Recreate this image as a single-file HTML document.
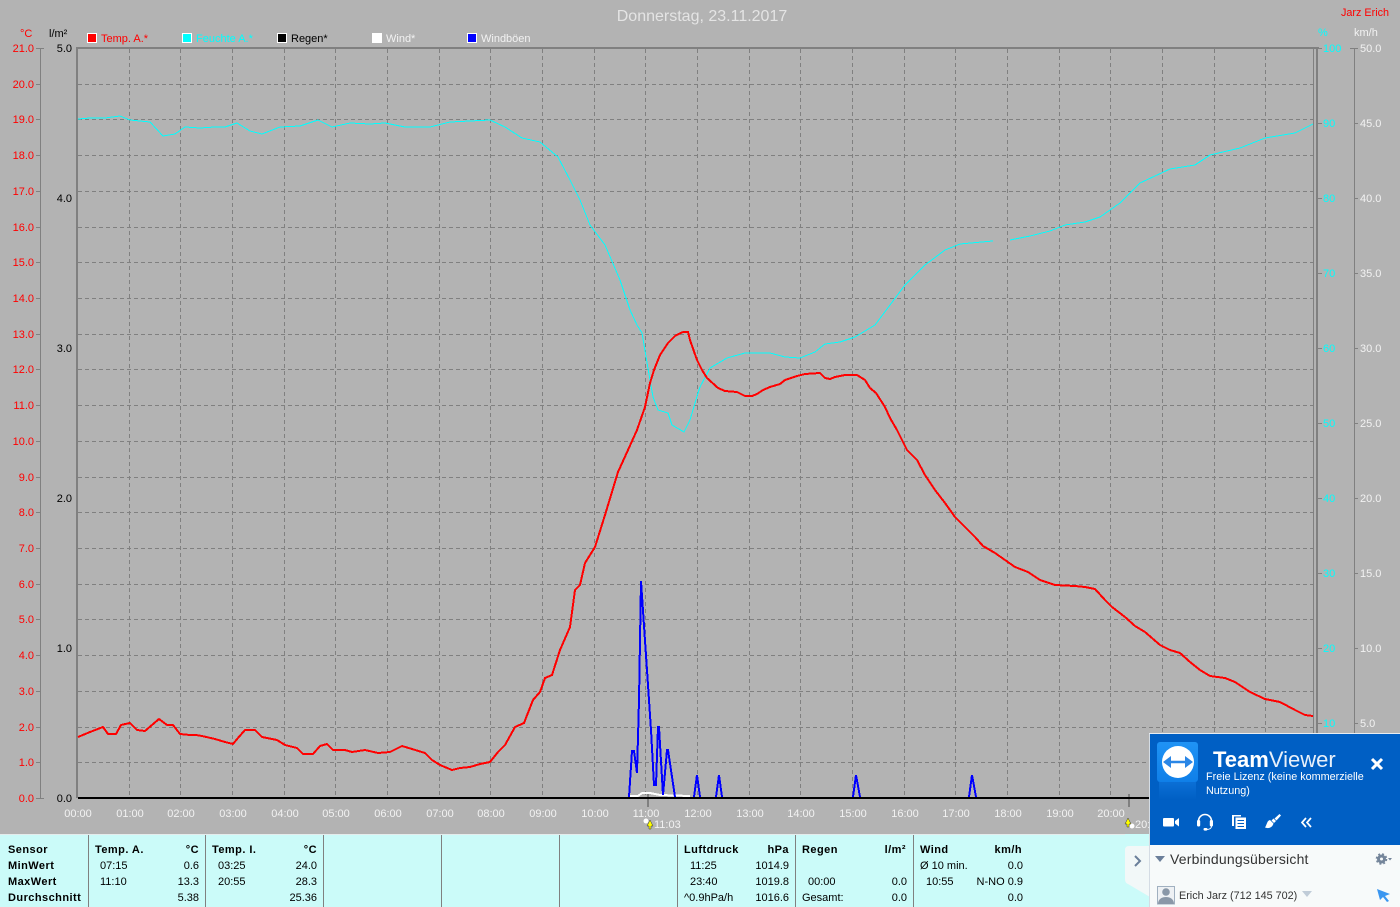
<!DOCTYPE html>
<html><head><meta charset="utf-8"><style>
html,body{margin:0;padding:0;width:1400px;height:907px;overflow:hidden;background:#b3b3b3}
svg{display:block;position:absolute;left:0;top:0}
text{font-family:"Liberation Sans",sans-serif;font-size:11px}
.r text{fill:#f00;text-anchor:end}
.k text{fill:#000;text-anchor:end}
.c text{fill:#0ff;text-anchor:start}
.w text{fill:#f2f2f2;text-anchor:start}
.x text{fill:#f2f2f2;text-anchor:middle}
.b text{fill:#000;font-weight:bold;letter-spacing:.45px}
.t text{fill:#000}
.e{text-anchor:end}
</style></head><body>
<svg width="1400" height="907" viewBox="0 0 1400 907">
<defs><linearGradient id="lg" x1="0" y1="0" x2="0" y2="1"><stop offset="0" stop-color="#1f93f5"/><stop offset="1" stop-color="#0f7fe8"/></linearGradient>
<linearGradient id="rf" x1="0" y1="0" x2="0" y2="1"><stop offset="0" stop-color="#0b6fd6"/><stop offset="1" stop-color="#005fc4"/></linearGradient></defs>
<rect width="1400" height="907" fill="#b3b3b3"/>
<text x="702" y="21" text-anchor="middle" fill="#e4e4e4" style="font-size:16px">Donnerstag, 23.11.2017</text>
<text x="1389" y="16" text-anchor="end" fill="#f00" style="font-size:10.8px">Jarz Erich</text>
<text x="20" y="37" fill="#f00">°C</text><text x="49" y="37" fill="#000">l/m²</text>
<text x="1318" y="36" fill="#0ff">%</text><text x="1354" y="36" fill="#f2f2f2">km/h</text>
<g shape-rendering="crispEdges">
<rect x="87.5" y="33.5" width="9" height="9" fill="#f00" stroke="#fff"/>
<rect x="182.5" y="33.5" width="9" height="9" fill="#0ff" stroke="#fff"/>
<rect x="277.5" y="33.5" width="9" height="9" fill="#000" stroke="#fff"/>
<rect x="372.5" y="33.5" width="9" height="9" fill="#fff" stroke="#fff"/>
<rect x="467.5" y="33.5" width="9" height="9" fill="#00f" stroke="#fff"/>
<g stroke="#808080" stroke-width="1" stroke-dasharray="4 3" fill="none">
<path d="M78 84.5H1313M78 119.5H1313M78 155.5H1313M78 191.5H1313M78 227.5H1313M78 262.5H1313M78 298.5H1313M78 334.5H1313M78 369.5H1313M78 405.5H1313M78 441.5H1313M78 477.5H1313M78 512.5H1313M78 548.5H1313M78 584.5H1313M78 619.5H1313M78 655.5H1313M78 691.5H1313M78 727.5H1313M78 762.5H1313"/>
<path d="M129.5 49V797M180.5 49V797M232.5 49V797M284.5 49V797M335.5 49V797M387.5 49V797M439.5 49V797M490.5 49V797M542.5 49V797M594.5 49V797M645.5 49V797M697.5 49V797M749.5 49V797M800.5 49V797M852.5 49V797M904.5 49V797M955.5 49V797M1007.5 49V797M1059.5 49V797M1110.5 49V797M1162.5 49V797M1214.5 49V797M1265.5 49V797"/>
</g>
<rect x="76" y="47" width="1243" height="2" fill="#808080"/>
<rect x="76" y="47" width="2" height="751" fill="#808080"/>
<rect x="1316" y="47" width="2" height="860" fill="#808080"/>
<rect x="1313" y="49" width="1" height="749" fill="#808080"/>
<rect x="40" y="48" width="1" height="751" fill="#808080"/>
<rect x="36" y="48" width="8" height="1" fill="#808080"/>
<rect x="36" y="798" width="8" height="1" fill="#808080"/>
<path stroke="#808080" d="M36 84.5H41M36 119.5H41M36 155.5H41M36 191.5H41M36 227.5H41M36 262.5H41M36 298.5H41M36 334.5H41M36 369.5H41M36 405.5H41M36 441.5H41M36 477.5H41M36 512.5H41M36 548.5H41M36 584.5H41M36 619.5H41M36 655.5H41M36 691.5H41M36 727.5H41M36 762.5H41"/>
<rect x="1354" y="48" width="1" height="690" fill="#808080"/>
<path stroke="#808080" d="M1350 48.5H1358M1354 123.5H1358M1354 198.5H1358M1354 273.5H1358M1354 348.5H1358M1354 423.5H1358M1354 498.5H1358M1354 573.5H1358M1354 648.5H1358M1354 723.5H1358"/>
<path stroke="#808080" d="M1318 48.5H1322M1318 123.5H1322M1318 198.5H1322M1318 273.5H1322M1318 348.5H1322M1318 423.5H1322M1318 498.5H1322M1318 573.5H1322M1318 648.5H1322M1318 723.5H1322"/>
<rect x="647" y="794" width="2" height="13" fill="#808080"/>
<rect x="1128" y="794" width="2" height="13" fill="#808080"/>
</g>
<text x="101" y="42" fill="#f00">Temp. A.*</text>
<text x="196" y="42" fill="#0ff">Feuchte A.*</text>
<text x="291" y="42" fill="#000">Regen*</text>
<text x="386" y="42" fill="#f2f2f2">Wind*</text>
<text x="481" y="42" fill="#f2f2f2">Windböen</text>
<g class="r">
<text x="34" y="52">21.0</text><text x="34" y="88">20.0</text><text x="34" y="123">19.0</text><text x="34" y="159">18.0</text><text x="34" y="195">17.0</text><text x="34" y="231">16.0</text><text x="34" y="266">15.0</text><text x="34" y="302">14.0</text><text x="34" y="338">13.0</text><text x="34" y="373">12.0</text><text x="34" y="409">11.0</text><text x="34" y="445">10.0</text><text x="34" y="481">9.0</text><text x="34" y="516">8.0</text><text x="34" y="552">7.0</text><text x="34" y="588">6.0</text><text x="34" y="623">5.0</text><text x="34" y="659">4.0</text><text x="34" y="695">3.0</text><text x="34" y="731">2.0</text><text x="34" y="766">1.0</text><text x="34" y="802">0.0</text>
</g>
<g class="k">
<text x="72" y="52">5.0</text><text x="72" y="202">4.0</text><text x="72" y="352">3.0</text><text x="72" y="502">2.0</text><text x="72" y="652">1.0</text><text x="72" y="802">0.0</text>
</g>
<g class="c">
<text x="1323" y="52">100</text><text x="1323" y="127">90</text><text x="1323" y="202">80</text><text x="1323" y="277">70</text><text x="1323" y="352">60</text><text x="1323" y="427">50</text><text x="1323" y="502">40</text><text x="1323" y="577">30</text><text x="1323" y="652">20</text><text x="1323" y="727">10</text>
</g>
<g class="w">
<text x="1360" y="52">50.0</text><text x="1360" y="127">45.0</text><text x="1360" y="202">40.0</text><text x="1360" y="277">35.0</text><text x="1360" y="352">30.0</text><text x="1360" y="427">25.0</text><text x="1360" y="502">20.0</text><text x="1360" y="577">15.0</text><text x="1360" y="652">10.0</text><text x="1360" y="727">5.0</text>
</g>
<g class="x">
<text x="78" y="817">00:00</text><text x="130" y="817">01:00</text><text x="181" y="817">02:00</text><text x="233" y="817">03:00</text><text x="285" y="817">04:00</text><text x="336" y="817">05:00</text><text x="388" y="817">06:00</text><text x="440" y="817">07:00</text><text x="491" y="817">08:00</text><text x="543" y="817">09:00</text><text x="595" y="817">10:00</text><text x="646" y="817">11:00</text><text x="698" y="817">12:00</text><text x="750" y="817">13:00</text><text x="801" y="817">14:00</text><text x="853" y="817">15:00</text><text x="905" y="817">16:00</text><text x="956" y="817">17:00</text><text x="1008" y="817">18:00</text><text x="1060" y="817">19:00</text><text x="1111" y="817">20:00</text>
</g>
<text x="654" y="828" fill="#f2f2f2">11:03</text>
<text x="1135" y="828" fill="#f2f2f2">20:</text>
<circle cx="646" cy="821" r="2.5" fill="#fff"/>
<path d="M650 820l3 6h-2v3h-2v-3h-2z" fill="#ff0" stroke="#333" stroke-width=".5"/>
<circle cx="1132" cy="826" r="2.5" fill="#fff"/>
<path d="M1128 818l3 6h-2v3h-2v-3h-2z" fill="#ff0" stroke="#333" stroke-width=".5"/>
<g shape-rendering="crispEdges" fill="none">
<polyline stroke="#fff" stroke-width="2" points="630,796 638,796 642,793 650,793 660,795 690,796"/>
<polyline stroke="#0ff" stroke-width="1" points="78,119 90,118 105,118 120,116 130,120 150,122 163,136 175,134 185,127 200,128 215,127 225,127 237,123 250,131 262,134 280,127 300,126 318,120 332,127 350,123 370,124 385,123 405,127 430,127 450,122 470,121 490,120 505,127 522,138 540,142 558,157 570,180 580,200 590,225 605,245 620,280 630,310 637,325 642,333 650,380 653,397 658,410 668,413 672,425 684,432 690,420 698,393 700,387 710,368 727,358 745,353 770,353 785,357 800,358 815,352 825,344 840,342 855,337 875,325 890,305 905,285 925,265 945,250 960,244 993,241"/>
<polyline stroke="#0ff" stroke-width="1" points="1010,240 1030,236 1050,231 1065,225 1085,222 1100,217 1120,203 1140,183 1170,169 1195,165 1210,155 1240,148 1265,138 1295,133 1313,124"/>
</g>
<rect x="78" y="797" width="1238" height="2" fill="#000" shape-rendering="crispEdges"/>
<g fill="none" stroke="#00f" stroke-width="2" shape-rendering="crispEdges">
<polyline points="629,797 632,751 634,751 637,773 639,700 641,581 649,700 651,730 654,785 656,785 658,727 659,727 663,795 667,750 668,750 675,797"/>
<polyline points="694,797 697,775 700,797"/>
<polyline points="716,797 719,775 722,797"/>
<polyline points="853,797 856,775 860,797"/>
<polyline points="969,797 972,775 976,797"/>
</g>
<polyline fill="none" stroke="#f00" stroke-width="2" shape-rendering="crispEdges" points="78,737 90,732 103,727 108,734 116,734 121,725 130,723 137,730 145,731 152,725 159,719 167,725 173,725 180,734 190,735 196,735 202,736 215,739 225,742 233,744 238,738 245,730 255,730 262,737 277,740 285,745 297,748 303,754 313,754 320,746 327,744 333,750 345,750 352,752 365,750 378,753 390,752 402,746 412,749 425,753 432,760 440,765 452,770 460,768 470,767 480,764 490,762 498,752 505,745 515,727 524,723 533,700 540,692 545,678 552,675 560,650 570,627 575,590 580,585 585,563 595,547 605,515 618,472 628,450 637,430 645,407 650,383 654,370 660,355 668,343 675,336 683,332 688,332 690,340 697,360 702,370 707,378 718,388 725,391 737,392 745,396 752,396 757,394 763,390 770,387 780,384 785,380 797,376 805,374 820,373 825,378 830,379 835,377 845,375 857,375 865,380 870,388 876,393 885,407 890,418 897,430 907,450 917,460 925,475 935,490 945,503 955,517 965,527 975,537 983,546 995,553 1005,560 1015,567 1028,572 1040,580 1055,585 1075,586 1085,587 1095,589 1105,600 1112,607 1125,617 1135,626 1145,632 1160,645 1170,650 1180,653 1190,662 1200,670 1210,676 1225,678 1235,682 1250,692 1265,699 1280,702 1295,710 1305,715 1313,716"/>

<!-- table -->
<rect x="0" y="834" width="1150" height="73" fill="#cbfbf9"/>
<rect x="0" y="834" width="1125" height="1" fill="#e4ecec"/>
<g fill="#808080" shape-rendering="crispEdges">
<rect x="88" y="835" width="1" height="72"/><rect x="205" y="835" width="1" height="72"/><rect x="323" y="835" width="1" height="72"/><rect x="441" y="835" width="1" height="72"/><rect x="559" y="835" width="1" height="72"/><rect x="677" y="835" width="1" height="72"/><rect x="795" y="835" width="1" height="72"/><rect x="913" y="835" width="1" height="72"/>
</g>
<g class="b">
<text x="8" y="853">Sensor</text><text x="8" y="869">MinWert</text><text x="8" y="885">MaxWert</text><text x="8" y="901">Durchschnitt</text>
<text x="95" y="853">Temp. A.</text><text x="199" y="853" class="e">°C</text>
<text x="212" y="853">Temp. I.</text><text x="317" y="853" class="e">°C</text>
<text x="684" y="853">Luftdruck</text><text x="789" y="853" class="e">hPa</text>
<text x="802" y="853">Regen</text><text x="906" y="853" class="e">l/m²</text>
<text x="920" y="853">Wind</text><text x="1022" y="853" class="e">km/h</text>
</g>
<g class="t">
<text x="100" y="869">07:15</text><text x="199" y="869" class="e">0.6</text>
<text x="100" y="885">11:10</text><text x="199" y="885" class="e">13.3</text>
<text x="199" y="901" class="e">5.38</text>
<text x="218" y="869">03:25</text><text x="317" y="869" class="e">24.0</text>
<text x="218" y="885">20:55</text><text x="317" y="885" class="e">28.3</text>
<text x="317" y="901" class="e">25.36</text>
<text x="690" y="869">11:25</text><text x="789" y="869" class="e">1014.9</text>
<text x="690" y="885">23:40</text><text x="789" y="885" class="e">1019.8</text>
<text x="684" y="901">^0.9hPa/h</text><text x="789" y="901" class="e">1016.6</text>
<text x="808" y="885">00:00</text><text x="907" y="885" class="e">0.0</text>
<text x="802" y="901">Gesamt:</text><text x="907" y="901" class="e">0.0</text>
<text x="920" y="869">Ø 10 min.</text><text x="1023" y="869" class="e">0.0</text>
<text x="926" y="885">10:55</text><text x="1023" y="885" class="e">N-NO 0.9</text>
<text x="1023" y="901" class="e">0.0</text>
</g>

<!-- TeamViewer -->
<path d="M1150 846H1129Q1125 846 1125 850V879Q1125 883 1128 884L1150 897Z" fill="#f2f8f8"/>
<path d="M1135 856l5 5-5 5" fill="none" stroke="#6a7f9a" stroke-width="2"/>
<rect x="1150" y="845" width="250" height="62" fill="#f7fafa"/>
<rect x="1149" y="733" width="251" height="1" fill="#e8edf2"/>
<rect x="1149" y="734" width="1" height="173" fill="#d4dce4"/>
<rect x="1150" y="734" width="250" height="111" fill="#005fc4"/>
<rect x="1157" y="742" width="41" height="40" rx="3" fill="url(#lg)"/>
<rect x="1159" y="782" width="37" height="18" fill="url(#rf)"/>
<circle cx="1178" cy="762" r="16" fill="#fff"/>
<path d="M1163 762l8-6v4.7h14v-4.7l8 6-8 6v-4.7h-14v4.7z" fill="#2a86e6"/>
<text x="1213" y="767" fill="#fff" style="font-size:22px;font-weight:bold">Team<tspan style="font-weight:normal" fill="#e8f0fa">Viewer</tspan></text>
<path d="M1372 759l10 10M1382 759l-10 10" stroke="#fff" stroke-width="3" fill="none"/>
<text x="1206" y="780" fill="#fff" style="font-size:10.8px">Freie Lizenz (keine kommerzielle</text>
<text x="1206" y="794" fill="#fff" style="font-size:10.8px">Nutzung)</text>
<g fill="#fff">
<rect x="1163" y="818" width="11" height="8.5" rx="1"/><path d="M1175 821l4-3v8.5l-4-3z"/>
<path d="M1198.5 822v-1a6.5 6.5 0 0 1 13 0v1" fill="none" stroke="#fff" stroke-width="1.6"/>
<rect x="1197" y="820" width="3.2" height="6.5" rx="1.2"/><rect x="1209.8" y="820" width="3.2" height="6.5" rx="1.2"/>
<path d="M1211.5 826c0 2.5-2.5 3.5-5 3.5" fill="none" stroke="#fff"/>
<rect x="1203.5" y="828" width="4" height="2.6" rx="1.2"/>
<path d="M1232 815h9v1.5h-7v9.5h-2z"/><rect x="1235.5" y="817.5" width="10.5" height="11.5"/>
<path d="M1265 827.5c3.5 1.5 7.5 0 8.5-4l-3.5-3.5c-3 .5-3 4.5-5 7.500z"/><path d="M1271.500 820.500l2.500 2.500 2-2-2.500-2.500z"/><path d="M1274.500 818.500l5-4.500 1.500 1.500-4.500 5z"/>
</g>
<g stroke="#005fc4" stroke-width="1"><path d="M1237.500 820.500h6.500M1237.500 823.500h6.500M1237.500 826.500h6.500"/></g>
<path d="M1306 818l-4 4.500 4 4.500M1311 818l-4 4.500 4 4.500" fill="none" stroke="#fff" stroke-width="1.700"/>
<path d="M1155 856h10l-5 6z" fill="#6b7f9a"/>
<text x="1170" y="864" fill="#333" style="font-size:14px;letter-spacing:.2px">Verbindungsübersicht</text>
<circle cx="1381.500" cy="859" r="3" fill="none" stroke="#74859a" stroke-width="3"/>
<circle cx="1381.500" cy="859" r="5" fill="none" stroke="#74859a" stroke-width="1.600" stroke-dasharray="2 2"/>
<path d="M1388 858h4l-2 2.500z" fill="#74859a"/>
<rect x="1157.500" y="886.500" width="17" height="17.500" fill="#eef1f4" stroke="#a0b0c0"/>
<circle cx="1166" cy="892" r="3.800" fill="#8a98a8"/><path d="M1158 904c0-5 4-7 8-7s8 2 8 7z" fill="#8a98a8"/>
<text x="1179" y="899" fill="#333" style="font-size:10.800px">Erich Jarz (712 145 702)</text>
<path d="M1302 891h10l-5 6z" fill="#c0ccd8"/>
<path d="M1377 889l13 5-5 2 4 5-2 1-4-5-3 3z" fill="#3a96f0"/>
</svg>
</body></html>
